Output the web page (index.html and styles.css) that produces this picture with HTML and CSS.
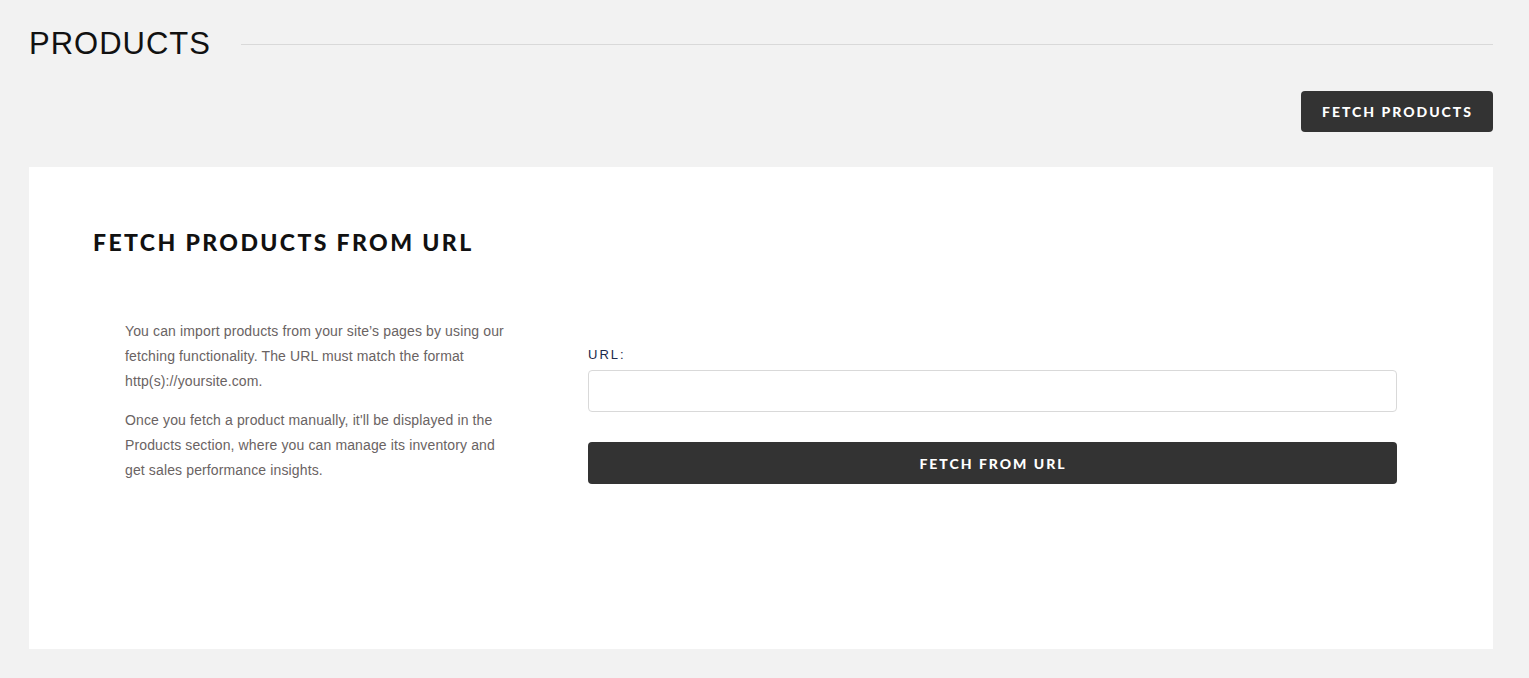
FILE: index.html
```html
<!DOCTYPE html>
<html lang="en">
<head>
    <meta charset="UTF-8">
    <meta name="viewport" content="width=device-width, initial-scale=1.0">
    <title>Products</title>
    <link rel="stylesheet" href="styles.css">
</head>
<body>
    <header class="page-header">
        <h1>Products</h1>
        <span class="header-line"></span>
    </header>

    <div class="toolbar">
        <button class="btn" type="button">Fetch Products</button>
    </div>

    <section class="card">
        <h2>Fetch products from URL</h2>

        <div class="fetch-grid">
            <div class="fetch-info">
                <p>You can import products from your site’s pages by using our fetching functionality. The URL must match the format http(s)://yoursite.com.</p>
                <p>Once you fetch a product manually, it'll be displayed in the Products section, where you can manage its inventory and get sales performance insights.</p>
            </div>

            <form class="fetch-form" id="fetchForm">
                <label for="url">URL:</label>
                <input type="text" id="url">
                <button class="btn btn-wide" type="submit">Fetch from URL</button>
            </form>
        </div>
    </section>

    <script>
        // Keep the demo form from reloading the page
        document.getElementById('fetchForm').addEventListener('submit', (e) => {
            e.preventDefault();
        });
    </script>
</body>
</html>
```

FILE: styles.css
```css
body {
    margin: 0;
    padding: 0 36px 29px 29px;
    background-color: #f2f2f2;
    font-family: "Liberation Sans", Arial, sans-serif;
}

.page-header {
    display: flex;
    align-items: center;
    gap: 30px;
    padding-top: 26px;
}

.page-header h1 {
    margin: 0;
    font-size: 31px;
    font-weight: normal;
    letter-spacing: 1px;
    text-transform: uppercase;
    color: #111;
    line-height: 36px;
}

.header-line {
    flex: 1;
    height: 1px;
    background-color: #d9d9d9;
}

.toolbar {
    display: flex;
    justify-content: flex-end;
    margin-top: 29px;
}

.btn {
    height: 41px;
    padding: 0 20px 0 21px;
    color: white;
    background-color: #333;
    border: none;
    border-radius: 4px;
    font-family: Lato, sans-serif;
    font-size: 14px;
    font-weight: 900;
    letter-spacing: 2px;
    text-transform: uppercase;
    cursor: pointer;
}

.btn:hover {
    background-color: #222;
}

.card {
    margin-top: 35px;
    padding: 59px 96px 165px 64px;
    background-color: white;
}

.card h2 {
    margin: 0;
    font-family: Lato, sans-serif;
    font-size: 23px;
    font-weight: 900;
    letter-spacing: 2.4px;
    text-transform: uppercase;
    color: #111;
    line-height: 32px;
}

.fetch-grid {
    display: grid;
    grid-template-columns: 390px 1fr;
    gap: 73px;
    align-items: end;
    margin-top: 61px;
    padding-left: 32px;
}

.fetch-info {
    padding-bottom: 1px;
}

.fetch-info p {
    margin: 0 0 14px;
    font-size: 14px;
    letter-spacing: 0.13px;
    line-height: 25px;
    color: #6a6363;
}

.fetch-info p:last-child {
    margin-bottom: 0;
}

.fetch-form {
    display: flex;
    flex-direction: column;
}

.fetch-form label {
    font-size: 13px;
    letter-spacing: 2px;
    color: #1c2a4a;
    line-height: 16px;
    margin-bottom: 7px;
}

.fetch-form input {
    height: 42px;
    box-sizing: border-box;
    padding: 0 12px;
    border: 1px solid #d9d9d9;
    border-radius: 4px;
    font-size: 14px;
}

.btn-wide {
    width: 100%;
    height: 42px;
    margin-top: 30px;
}
```
